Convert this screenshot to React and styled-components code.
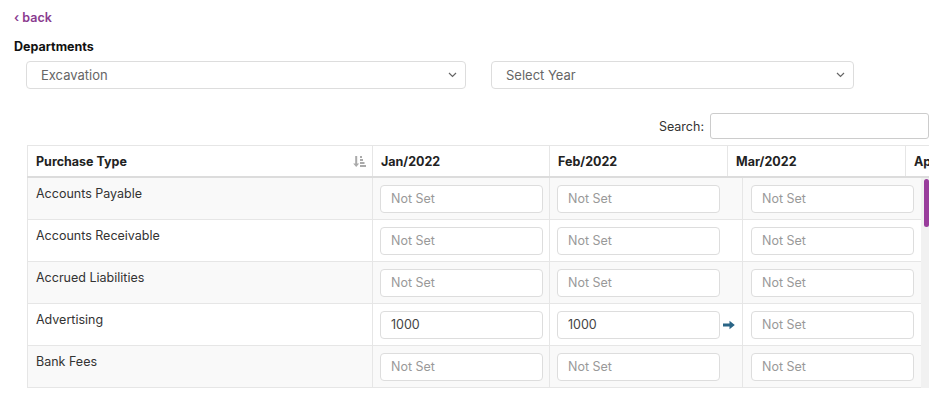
import React from 'react';
import styled, { createGlobalStyle } from 'styled-components';

const GlobalStyle = createGlobalStyle`
    body{
        margin: 0;
        background: #fff;
        font-family: "Inter", "Open Sans", sans-serif;
        color: #333;
    }
    *{
        box-sizing: border-box;
    }
`;

const rows = [
    { name: 'Accounts Payable', values: ['', '', ''] },
    { name: 'Accounts Receivable', values: ['', '', ''] },
    { name: 'Accrued Liabilities', values: ['', '', ''] },
    { name: 'Advertising', values: ['1000', '1000', ''], arrow: true },
    { name: 'Bank Fees', values: ['', '', ''] },
];

const months = ['Jan/2022', 'Feb/2022', 'Mar/2022', 'Apr/2022'];

const Chevron = () => (
    <svg width="9" height="6" viewBox="0 0 9 6">
        <path d="M1 1l3.5 3.5L8 1" fill="none" stroke="#666" strokeWidth="1.2" />
    </svg>
);

const SortIcon = () => (
    <svg width="13" height="13" viewBox="0 0 13 13" fill="#aaa">
        <path d="M2.2 1h2v7.4h2L3.2 12 0.2 8.4h2z" />
        <rect x="7" y="1" width="2" height="2" />
        <rect x="7" y="4" width="3" height="2" />
        <rect x="7" y="7" width="4.5" height="2" />
        <rect x="7" y="10" width="6" height="2" />
    </svg>
);

const Arrow = () => (
    <svg width="12" height="10" viewBox="0 0 12 10">
        <path d="M0 3.6h6.5V0.8L11.8 5 6.5 9.2V6.4H0z" fill="#2a6586" />
    </svg>
);

const App = () => {
    return (
        <StyledPage>
            <GlobalStyle />
            <BackLink href="#">‹ back</BackLink>
            <Label>Departments</Label>
            <Filters>
                <Select width="440px">
                    <span>Excavation</span>
                    <Chevron />
                </Select>
                <Select width="363px">
                    <span>Select Year</span>
                    <Chevron />
                </Select>
            </Filters>
            <SearchRow>
                <label>Search:</label>
                <SearchInput type="text" />
            </SearchRow>
            <TableWrap>
                <HeadRow>
                    <HeadCell>
                        Purchase Type
                        <SortIcon />
                    </HeadCell>
                    {months.map((m) => (
                        <HeadCell key={m}>{m}</HeadCell>
                    ))}
                </HeadRow>
                <BodyWrap>
                    <Body>
                        {rows.map((row, i) => (
                            <BodyRow key={row.name} striped={i % 2 === 0}>
                                <NameCell>{row.name}</NameCell>
                                {row.values.map((v, j) => (
                                    <InputCell key={j} pad={j === 2 ? '8px' : '7px'}>
                                        <CellInput placeholder="Not Set" defaultValue={v} />
                                        {j === 1 && <ArrowSlot>{row.arrow && <Arrow />}</ArrowSlot>}
                                    </InputCell>
                                ))}
                            </BodyRow>
                        ))}
                    </Body>
                    <ScrollTrack>
                        <ScrollThumb />
                    </ScrollTrack>
                </BodyWrap>
            </TableWrap>
        </StyledPage>
    );
};

const StyledPage = styled.div`
    padding: 10px 0 0 14px;
    width: 948px;
    height: 394px;
    overflow: hidden;
`;

const BackLink = styled.a`
    display: block;
    color: #8a3b8f;
    font-weight: 600;
    font-size: 12.5px;
    text-decoration: none;
    line-height: 16px;
`;

const Label = styled.div`
    margin-top: 13px;
    font-weight: 700;
    font-size: 12.5px;
    color: #111;
    line-height: 16px;
`;

const Filters = styled.div`
    display: flex;
    gap: 25px;
    padding-left: 12px;
    margin-top: 6px;
`;

const Select = styled.div`
    width: ${(p) => p.width};
    height: 28px;
    border: 1px solid #ddd;
    border-radius: 4px;
    display: flex;
    align-items: center;
    justify-content: space-between;
    padding: 0 8px 0 14px;
    font-size: 13px;
    color: #666;
`;

const SearchRow = styled.div`
    display: flex;
    justify-content: flex-end;
    align-items: center;
    gap: 6px;
    margin-top: 24px;
    width: 915px;
    font-size: 12.5px;
    color: #333;
`;

const SearchInput = styled.input`
    width: 219px;
    height: 26px;
    border: 1px solid #ccc;
    border-radius: 3px;
    outline: none;
`;

const TableWrap = styled.div`
    margin: 6px 0 0 13px;
    width: 902px;
    overflow: hidden;
`;

const HeadRow = styled.div`
    display: grid;
    grid-template-columns: 345px 177px 178px 178px 24px;
    border-top: 1px solid #e6e6e6;
    border-bottom: 2px solid #dcdcdc;
    overflow: hidden;
`;

const HeadCell = styled.div`
    display: flex;
    align-items: center;
    justify-content: space-between;
    height: 30px;
    padding: 0 6px 0 8px;
    font-weight: 700;
    font-size: 12.5px;
    color: #222;
    border-left: 1px solid #e6e6e6;
    white-space: nowrap;
    overflow: hidden;
`;

const BodyWrap = styled.div`
    display: flex;
`;

const Body = styled.div`
    width: 894px;
`;

const BodyRow = styled.div`
    display: grid;
    grid-template-columns: 345px 177px 193px 179px;
    background: ${(p) => (p.striped ? '#f9f9f9' : '#fff')};
    border-bottom: 1px solid #e6e6e6;
    height: 42px;
`;

const NameCell = styled.div`
    padding: 8px 8px;
    font-size: 12.5px;
    color: #333;
    border-left: 1px solid #e6e6e6;
    line-height: 16px;
`;

const InputCell = styled.div`
    display: flex;
    align-items: center;
    padding: 0 ${(p) => p.pad} 0 ${(p) => p.pad};
    border-left: 1px solid #e6e6e6;
`;

const CellInput = styled.input`
    width: 163px;
    height: 28px;
    border: 1px solid #ddd;
    border-radius: 4px;
    padding: 0 10px;
    font-size: 12.5px;
    font-family: inherit;
    color: #444;
    background: #fff;
    outline: none;
    &::placeholder{
        color: #999;
    }
`;

const ArrowSlot = styled.div`
    width: 22px;
    display: flex;
    justify-content: center;
    padding-left: 2px;
`;

const ScrollTrack = styled.div`
    width: 8px;
    background: #f1f1f1;
    display: flex;
    justify-content: flex-end;
`;

const ScrollThumb = styled.div`
    width: 5px;
    height: 48px;
    background: #993d9c;
    border-radius: 3px;
    margin-top: 1px;
`;

export default App;
